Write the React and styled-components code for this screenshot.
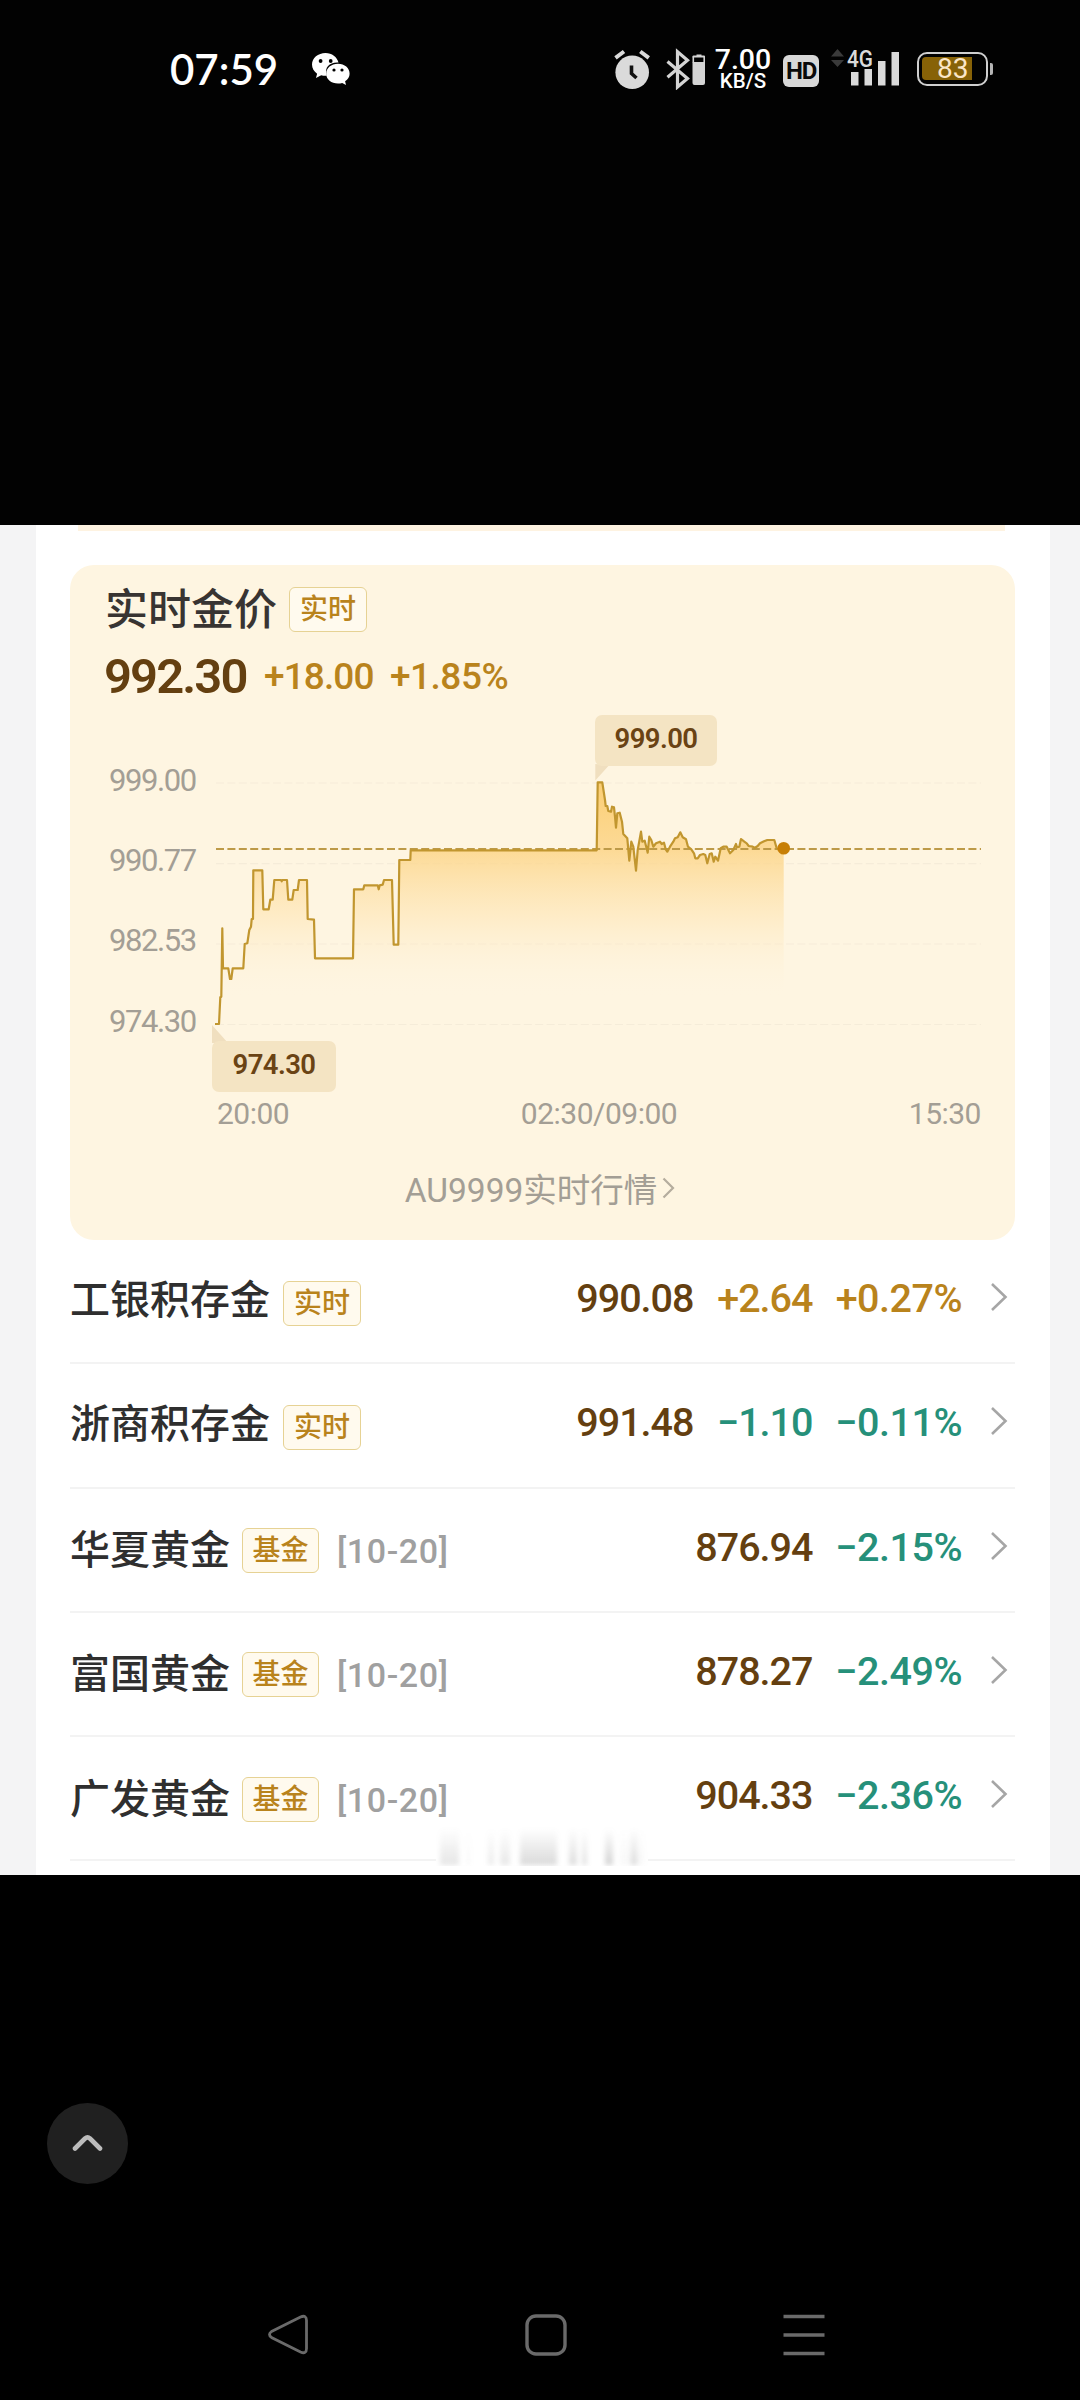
import React from "react";
import styled, { createGlobalStyle } from "styled-components";

const Global = createGlobalStyle`
  * { box-sizing: border-box; }
  html, body { margin: 0; padding: 0; background: #000; }
  body { font-family: Roboto, "Noto Sans CJK SC", sans-serif; }
`;

const Screen = styled.div`
  width: 1080px;
  height: 2400px;
  background: #000;
  display: flex;
  flex-direction: column;
  overflow: hidden;
`;

/* ---------- status bar ---------- */

const StatusBar = styled.header`
  height: 525px;
  padding: 40px 87px 0 170px;
  display: flex;
  align-items: flex-start;
  justify-content: space-between;
  background: #020202;
  color: #fff;
`;

const StatusSide = styled.div`
  height: 58px;
  display: flex;
  align-items: center;
`;

const Clock = styled.span`
  width: 142px;
  font: 600 42px/58px Lato, sans-serif;
`;

const Speed = styled.div`
  width: 56px;
  margin: 2px 0 0 10px;
  display: flex;
  flex-direction: column;
  align-items: center;
  font-weight: 500;
`;

const SpeedValue = styled.span`
  font-size: 28.5px;
  line-height: 23px;
`;

const SpeedUnit = styled.span`
  font-size: 20.5px;
  line-height: 21px;
`;

const HdBadge = styled.span`
  width: 36px;
  height: 32px;
  margin: 3px 0 0 12px;
  border-radius: 6px;
  background: #d8d8d8;
  color: #0a0a0a;
  font-size: 24px;
  font-weight: 700;
  line-height: 33px;
  letter-spacing: -1.2px;
  text-align: center;
`;

const Signal = styled.svg`
  margin-left: 11px;
  overflow: visible;
`;

const Battery = styled.div`
  width: 71px;
  height: 34px;
  margin-left: 17px;
  padding: 3px;
  border: 2.5px solid #cfcfcf;
  border-radius: 10px;
`;

const BatteryLevel = styled.div`
  width: 50px;
  height: 23px;
  border-radius: 4px 0 0 4px;
  background: #876207;
  color: #fbe6c8;
  font-size: 28px;
  line-height: 24px;
  padding-left: 15px;
`;

const BatteryTip = styled.span`
  width: 3px;
  height: 12px;
  margin-left: 2px;
  border-radius: 0 2px 2px 0;
  background: #b5b5b5;
`;

/* ---------- price panel ---------- */

const Page = styled.main`
  height: 1350px;
  padding: 0 30px 0 36px;
  background: #f4f4f5;
`;

const Panel = styled.section`
  position: relative;
  height: 1350px;
  padding: 0 35px 0 34px;
  background: #fff;
`;

const PreviousCard = styled.div`
  height: 6px;
  margin: 0 10px 34px 8px;
  background: #fef3e1;
`;

const Card = styled.article`
  height: 675px;
  padding: 22px 34px 0 35px;
  border-radius: 24px;
  background: #fef5e1;
`;

const TitleLine = styled.div`
  height: 45px;
  display: flex;
  align-items: center;
`;

const Title = styled.h1`
  margin: 1px 12px 0 0;
  color: #383432;
  font-size: 43px;
  font-weight: 500;
  line-height: 45px;
`;

const Tag = styled.span`
  width: ${(p) => p.$width || 78}px;
  height: 45px;
  flex: none;
  border: 1.5px solid #e6d294;
  border-radius: 6px;
  background: #fffaee;
  color: #b9831c;
  font-size: 28px;
  font-weight: 500;
  line-height: 44px;
  text-align: center;
`;

const PriceLine = styled.div`
  height: 50px;
  margin-top: 19px;
  display: flex;
  align-items: center;
`;

const MainPrice = styled.strong`
  width: 160px;
  margin-left: -1px;
  color: #643f10;
  font-size: 49px;
  font-weight: 600;
  letter-spacing: -1.9px;
`;

const MainChange = styled.span`
  width: ${(p) => p.$width}px;
  color: #b9831c;
  font-size: 37px;
  font-weight: 500;
  letter-spacing: ${(p) => p.$spacing}px;
`;

const ChartRow = styled.div`
  height: 390px;
  margin-top: 1px;
  display: flex;
`;

const YAxis = styled.div`
  width: 111px;
  padding: 39px 0 0 4px;
  color: #a39e95;
  font-size: 31px;
  letter-spacing: -1.4px;
`;

const YTick = styled.div`
  height: 80.2px;
  line-height: 80.2px;
`;

const Plot = styled.div`
  position: relative;
  width: 765px;
`;

const PlotSvg = styled.svg`
  display: block;
  overflow: visible;
`;

const Callout = styled.span`
  position: absolute;
  left: ${(p) => p.$x}px;
  top: ${(p) => p.$y}px;
  width: ${(p) => p.$w}px;
  height: 51px;
  border-radius: 7px;
  background: #f4e4c3;
  color: #6a4314;
  font-size: 27.5px;
  font-weight: 600;
  line-height: 48px;
  letter-spacing: -0.6px;
  text-align: center;
`;

const XAxis = styled.div`
  height: 43px;
  padding-left: 112px;
  display: flex;
  justify-content: space-between;
  color: #a39e95;
  font-size: 30px;
  line-height: 43px;
  letter-spacing: -0.5px;
`;

const QuoteLink = styled.a`
  height: 105px;
  padding: 0 6px 0 0;
  display: flex;
  align-items: center;
  justify-content: center;
  gap: 5px;
  color: #a39e95;
  font-size: 33.5px;
`;

/* ---------- quote rows ---------- */

const Row = styled.div`
  height: 124.25px;
  display: flex;
  align-items: center;
  border-bottom: 2px solid #f3f3f3;
`;

const Name = styled.h2`
  margin: ${(p) => (p.$low ? "3px 12px 0 0" : "0 13px 1px 0")};
  color: #2f2f2f;
  font-size: 40px;
  font-weight: 500;
  line-height: 60px;
`;

const RowTag = styled(Tag)`
  margin-top: ${(p) => (p.$low ? 2 : 5)}px;
`;

const Range = styled.span`
  margin: 3px 0 0 18px;
  color: #a0a0a0;
  font-size: 34px;
  font-weight: 500;
  letter-spacing: 0.6px;
`;

const Figures = styled.div`
  flex: 1;
  margin-bottom: 5px;
  display: flex;
  align-items: center;
  justify-content: flex-end;
`;

const Figure = styled.span`
  width: ${(p) => p.$width}px;
  color: ${(p) => p.$color};
  font-size: 39.5px;
  font-weight: 500;
  letter-spacing: ${(p) => p.$spacing ?? -1}px;
  text-align: right;
`;

const Chevron = styled.svg`
  flex: none;
  margin: 0 7px 3px 28px;
`;

const Smudge = styled.div`
  position: absolute;
  left: 400px;
  top: 1302px;
  width: 212px;
  height: 39px;
  overflow: hidden;
  background: #fff;
`;

const SmudgeBars = styled.svg`
  display: block;
  filter: blur(2.6px);
`;

/* ---------- lower area ---------- */

const Lower = styled.div`
  flex: 1;
  padding: 228px 0 0 47px;
`;

const UpButton = styled.button`
  width: 81px;
  height: 81px;
  padding: 0 0 4px;
  border: 0;
  border-radius: 50%;
  background: #202020;
  display: flex;
  align-items: center;
  justify-content: center;
`;

const NavBar = styled.nav`
  height: 131px;
  padding: 0 255px 0 267px;
  display: flex;
  align-items: center;
  justify-content: space-between;
`;

const GOLD = "#b9831c";
const GREEN = "#26907a";
const BROWN = "#643f10";

const EARLY = [
  [405, 852], [417, 852], [421, 772], [424, 770], [427, 565], [429, 685], [445, 685], [450, 717], [454, 717], [458, 685],
  [490, 685], [494, 612], [502, 610], [508, 570], [513, 560], [515, 537], [519, 537], [520, 391], [547, 391], [550, 508],
  [566, 508], [571, 479], [578, 479], [583, 420], [603, 420], [605, 424], [607, 420], [621, 420], [625, 479], [637, 479],
  [641, 450], [653, 450], [657, 420], [681, 420], [683, 537], [702, 539], [705, 655], [819, 655], [822, 448], [850, 448],
  [853, 436], [893, 436], [896, 448], [899, 436], [908, 434], [912, 420], [936, 420], [941, 614], [955, 614], [958, 360],
  [991, 360], [992, 331],
].map(([x, y]) => [80 + x / 3, 740 + y / 3]);

const LATE = [
  [110, 451], [113, 247], [127, 247], [135, 300], [137, 318], [142, 318], [145, 333], [153, 335], [156, 320], [162, 322],
  [165, 350], [168, 383], [172, 340], [179, 338], [186, 365], [190, 402], [202, 415], [208, 482], [214, 425], [220, 440],
  [228, 512], [233, 450], [243, 395], [247, 425], [254, 422], [263, 458], [268, 410], [274, 420], [280, 440], [288, 430],
  [300, 425], [305, 432], [312, 428], [317, 448], [322, 455], [330, 440], [340, 425], [345, 415], [353, 412], [361, 397],
  [368, 412], [378, 418], [384, 440], [394, 448], [402, 460], [406, 475], [413, 475], [420, 465], [430, 462], [436, 465],
  [442, 490], [449, 462], [455, 460], [461, 485], [466, 470], [474, 482], [482, 445], [490, 440], [500, 440], [510, 460],
  [520, 450], [528, 432], [531, 442], [538, 440], [543, 417], [553, 425], [560, 430], [566, 438], [578, 440], [585, 443],
  [593, 438], [600, 430], [612, 424], [622, 420], [643, 420], [650, 445], [660, 452], [671, 447],
].map(([x, y]) => [560 + x / 3, 700 + y / 3]);

const LINE = [...EARLY, ...LATE].map(([x, y]) => `${x.toFixed(1)},${y.toFixed(1)}`).join(" ");

const ROWS = [
  { name: "工银积存金", tag: "实时", price: "990.08", delta: "+2.64", pct: "+0.27%", color: GOLD },
  { name: "浙商积存金", tag: "实时", price: "991.48", delta: "−1.10", pct: "−0.11%", color: GREEN },
  { name: "华夏黄金", tag: "基金", range: "[10-20]", price: "876.94", pct: "−2.15%", color: GREEN },
  { name: "富国黄金", tag: "基金", range: "[10-20]", price: "878.27", pct: "−2.49%", color: GREEN },
  { name: "广发黄金", tag: "基金", range: "[10-20]", price: "904.33", pct: "−2.36%", color: GREEN },
];

const SMUDGES = [
  [4, 19, 0.15], [31, 3, 0.05], [52, 6, 0.12], [64, 10, 0.14], [84, 37, 0.22], [133, 8, 0.2], [146, 5, 0.18],
  [169, 8, 0.26], [195, 6, 0.18], [184, 24, 0.04],
];

function WeChat() {
  return (
    <svg width="38" height="32" viewBox="0 0 38 32">
      <path
        fill="#fff"
        d="M13.500 0C6 0 0 5 0 11.600c0 3.800 2 7 5.100 9.100L4 25l5.200-2.800c1.500.4 3.200.6 5.500.5C12 14 18 9 26.500 9.600 25 4 20 0 13.500 0Z"
      />
      <path
        fill="#fff"
        d="M26 10.800c-6.700 0-11.800 4.300-11.800 9.900S19.300 30.500 26 30.500c1.500 0 2.900-.2 4.200-.6L34 32l-.9-3.700c2.800-1.800 4.500-4.500 4.500-7.600 0-5.600-5-9.900-11.600-9.900Z"
      />
      <circle cx="8.600" cy="8" r="1.900" />
      <circle cx="18.700" cy="8" r="1.900" />
      <circle cx="22" cy="17" r="1.600" />
      <circle cx="30" cy="17" r="1.600" />
    </svg>
  );
}

function AlarmBluetooth() {
  return (
    <svg width="92" height="42" viewBox="613 48 92 42">
      <circle cx="632.200" cy="72.300" r="16.800" fill="#dadada" />
      <path d="M615.500 57.800l8.500-6.300M648.800 57.800l-8.500-6.300" stroke="#dadada" strokeWidth="4" />
      <path d="M631.500 65.500v8l5 4.500" stroke="#111" strokeWidth="3.600" fill="none" />
      <path
        d="M667.500 61.500l20 17-10 8.500V51.800l10 8.500-20 17"
        stroke="#d4d4d4"
        strokeWidth="3.200"
        fill="none"
      />
      <path d="M692.500 57.500v-1q0-1 1-1h3v-1h5v1h2.500q1 0 1 1v1zM692.500 62h12.500v21q0 2-2 2H694.500q-2 0-2-2z" fill="#d4d4d4" />
      <path d="M693.300 56.500v6M704.200 56.500v6" stroke="#d4d4d4" strokeWidth="1.600" />
    </svg>
  );
}

function Bars() {
  return (
    <Signal width="70" height="42" viewBox="831 48 70 42">
      <path d="M832 56.500l6.500-7.500 6.500 7.500zM832 60l6.500 7 6.500-7z" fill="#3a3a3a" />
      <text x="848" y="67" fill="#dadada" fontSize="24.500" fontWeight="500" textLength="26" lengthAdjust="spacingAndGlyphs">
        4G
      </text>
      <path d="M852 72h7.500v13.500h-7.500zM865.500 69h7.500v16.500h-7.500zM879 61h7.500v24.500h-7.500zM892.500 52h7.500v33.500h-7.500z" fill="#dadada" />
    </Signal>
  );
}

function PriceChart() {
  return (
    <PlotSvg width="765" height="390" viewBox="216 702 765 390">
      <defs>
        <linearGradient id="area" gradientUnits="userSpaceOnUse" x1="0" y1="783" x2="0" y2="1000">
          <stop offset="0" stopColor="#fbca68" stopOpacity="0.900" />
          <stop offset="0.310" stopColor="#fcd383" stopOpacity="0.800" />
          <stop offset="0.620" stopColor="#fee3ae" stopOpacity="0.500" />
          <stop offset="1" stopColor="#fff5e3" stopOpacity="0" />
        </linearGradient>
      </defs>
      {[783, 863.7, 944, 1024.5].map((y) => (
        <path key={y} d={`M216 ${y}H981`} stroke="#f5ecd9" strokeWidth="1.200" strokeDasharray="8 3.400" />
      ))}
      <polygon points={`215,1024 ${LINE} 783.700,1024`} fill="url(#area)" />
      <path d="M216 849H981" stroke="#bd9a48" strokeWidth="2" strokeDasharray="8 3.400" />
      <polyline points={LINE} fill="none" stroke="#c1962f" strokeWidth="2.200" strokeLinejoin="round" />
      <circle cx="783.700" cy="848.300" r="6.300" fill="#c77f06" />
      <path d="M595.300 764v16.500l14-15.500zM212 1043v-18l16 18z" fill="#f0dfbf" />
    </PlotSvg>
  );
}

export default function App() {
  return (
    <Screen>
      <Global />
      <StatusBar>
        <StatusSide>
          <Clock>07:59</Clock>
          <WeChat />
        </StatusSide>
        <StatusSide>
          <AlarmBluetooth />
          <Speed>
            <SpeedValue>7.00</SpeedValue>
            <SpeedUnit>KB/S</SpeedUnit>
          </Speed>
          <HdBadge>HD</HdBadge>
          <Bars />
          <Battery>
            <BatteryLevel>83</BatteryLevel>
          </Battery>
          <BatteryTip />
        </StatusSide>
      </StatusBar>

      <Page>
        <Panel>
          <PreviousCard />
          <Card>
            <TitleLine>
              <Title>实时金价</Title>
              <Tag>实时</Tag>
            </TitleLine>
            <PriceLine>
              <MainPrice>992.30</MainPrice>
              <MainChange $width={126} $spacing={-0.9}>
                +18.00
              </MainChange>
              <MainChange $width={120} $spacing={-0.5}>
                +1.85%
              </MainChange>
            </PriceLine>
            <ChartRow>
              <YAxis>
                {["999.00", "990.77", "982.53", "974.30"].map((v) => (
                  <YTick key={v}>{v}</YTick>
                ))}
              </YAxis>
              <Plot>
                <PriceChart />
                <Callout $x={379} $y={13} $w={122}>
                  999.00
                </Callout>
                <Callout $x={-4} $y={339} $w={124}>
                  974.30
                </Callout>
              </Plot>
            </ChartRow>
            <XAxis>
              <span>20:00</span>
              <span>02:30/09:00</span>
              <span>15:30</span>
            </XAxis>
            <QuoteLink>
              AU9999实时行情
              <svg width="13" height="22" viewBox="0 0 13 22">
                <path d="M1.500 1.500L11 11l-9.500 9.500" fill="none" stroke="#b5ad9e" strokeWidth="2.200" />
              </svg>
            </QuoteLink>
          </Card>

          {ROWS.map((r) => (
            <Row key={r.name}>
              <Name $low={!!r.range}>{r.name}</Name>
              <RowTag $low={!!r.range} $width={r.range ? 77 : 78}>
                {r.tag}
              </RowTag>
              {r.range && <Range>{r.range}</Range>}
              <Figures>
                <Figure $width={120} $color={BROWN}>
                  {r.price}
                </Figure>
                {r.delta && (
                  <Figure $width={119} $color={r.color}>
                    {r.delta}
                  </Figure>
                )}
                <Figure $width={149.5} $color={r.color} $spacing={-0.5}>
                  {r.pct}
                </Figure>
                <Chevron width="18" height="30" viewBox="0 0 18 30">
                  <path d="M2 2l13.500 13L2 28" fill="none" stroke="#a6a6a6" strokeWidth="2.600" />
                </Chevron>
              </Figures>
            </Row>
          ))}

          <Smudge>
            <SmudgeBars width="212" height="39" viewBox="0 0 212 39">
              <defs>
                <linearGradient id="fade" x1="0" y1="0" x2="0" y2="1">
                  <stop offset="0" stopColor="#555" stopOpacity="0" />
                  <stop offset="1" stopColor="#555" />
                </linearGradient>
              </defs>
              {SMUDGES.map(([x, w, o]) => (
                <rect key={x} x={x} y="2" width={w} height="36" fill="url(#fade)" opacity={o} />
              ))}
            </SmudgeBars>
          </Smudge>
        </Panel>
      </Page>

      <Lower>
        <UpButton>
          <svg width="31" height="20" viewBox="0 0 31 20">
            <path
              d="M3 16.500L13 6.500q2.500-2.300 5 0l10 10"
              fill="none"
              stroke="#bcbcbc"
              strokeWidth="4.600"
              strokeLinecap="round"
            />
          </svg>
        </UpButton>
      </Lower>

      <NavBar>
        <svg width="42" height="42" viewBox="267 2314 42 42">
          <path
            d="M271.500 2331.500L300.500 2317q6-2.500 6 3.500v28q0 6-6 3.500L271.500 2337.500q-4-3 0-6z"
            fill="none"
            stroke="#6a6a6a"
            strokeWidth="2.800"
          />
        </svg>
        <svg width="42" height="42" viewBox="0 0 42 42">
          <rect x="2" y="2" width="38" height="38" rx="9" fill="none" stroke="#6a6a6a" strokeWidth="3.400" />
        </svg>
        <svg width="42" height="42" viewBox="0 0 42 42">
          <path d="M.5 2.500h41M.5 21h41M.5 39.500h41" stroke="#6a6a6a" strokeWidth="3.600" />
        </svg>
      </NavBar>
    </Screen>
  );
}
